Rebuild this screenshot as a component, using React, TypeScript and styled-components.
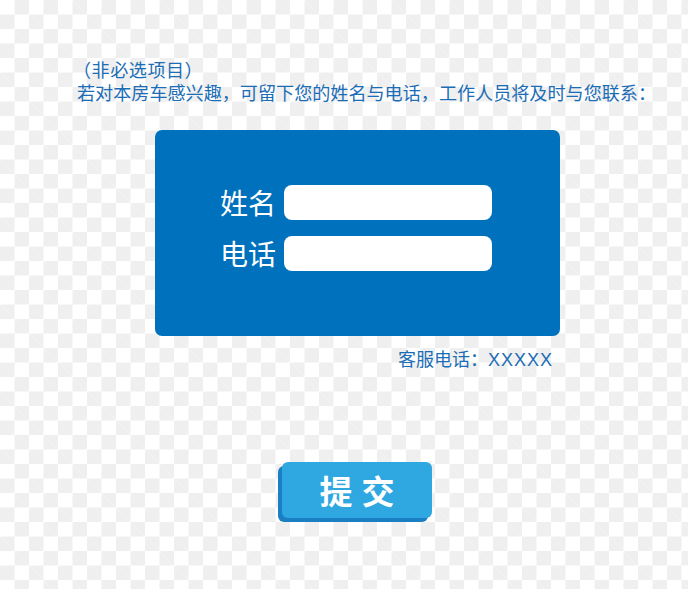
import React from 'react';
import styled, { createGlobalStyle } from 'styled-components';

const GlobalStyle = createGlobalStyle`
  html, body {
    margin: 0;
    padding: 0;
  }
  body {
    width: 688px;
    height: 589px;
    overflow: hidden;
    font-family: "Noto Sans CJK SC", "Noto Sans", sans-serif;
    background-color: #ffffff;
    background-image:
      linear-gradient(45deg, #efefef 25%, transparent 25%, transparent 75%, #efefef 75%),
      linear-gradient(45deg, #efefef 25%, transparent 25%, transparent 75%, #efefef 75%);
    background-size: 29px 29px;
    background-position: 0 0, 14.5px 14.5px;
  }
`;

const Page = styled.div`
  display: flex;
  flex-direction: column;
  padding-top: 58px;
`;

const Notes = styled.div`
  margin-left: 77px;
  color: #1b6db6;
  font-size: 18.1px;
  line-height: 23px;
`;

const Optional = styled.div`
  margin-left: -4px;
  letter-spacing: 0.5px;
`;

const Card = styled.div`
  margin: 26px 0 0 155px;
  width: 405px;
  height: 206px;
  box-sizing: border-box;
  background: #0071bc;
  border-radius: 7px;
  padding: 55px 0 0 65px;
`;

const Form = styled.div`
  display: grid;
  grid-template-columns: max-content 208px;
  justify-content: start;
  column-gap: 8px;
  row-gap: 16px;
  align-items: center;
`;

const Label = styled.span`
  color: #ffffff;
  font-size: 28px;
  line-height: 35px;
  text-align: right;
`;

const Field = styled.input`
  height: 35px;
  width: 208px;
  box-sizing: border-box;
  border: none;
  border-radius: 8px;
  background: #ffffff;
  outline: none;
  padding: 0 10px;
`;

const Hotline = styled.div`
  width: 553px;
  margin-top: 12px;
  text-align: right;
  color: #1b6db6;
  font-family: "Liberation Sans", "Noto Sans CJK SC", sans-serif;
  font-size: 18px;
  line-height: 24px;
`;

const Code = styled.span`
  letter-spacing: 1px;
`;

const Submit = styled.button`
  margin: 90px 0 0 282px;
  width: 150px;
  height: 56px;
  border: none;
  border-radius: 6px;
  background: #2fa8e1;
  box-shadow: -4px 4px 0 #1b80c3;
  color: #ffffff;
  font-family: "Noto Sans CJK SC", sans-serif;
  font-size: 33px;
  font-weight: 700;
  letter-spacing: 9px;
  padding: 0 0 0 9px;
  cursor: pointer;
`;

const App: React.FC = () => {
  return (
    <>
      <GlobalStyle />
      <Page>
        <Notes>
          <Optional>（非必选项目）</Optional>
          <div>若对本房车感兴趣，可留下您的姓名与电话，工作人员将及时与您联系：</div>
        </Notes>
        <Card>
          <Form>
            <Label>姓名</Label>
            <Field type="text" />
            <Label>电话</Label>
            <Field type="tel" />
          </Form>
        </Card>
        <Hotline>
          客服电话：<Code>XXXXX</Code>
        </Hotline>
        <Submit type="button">提交</Submit>
      </Page>
    </>
  );
};

export default App;
